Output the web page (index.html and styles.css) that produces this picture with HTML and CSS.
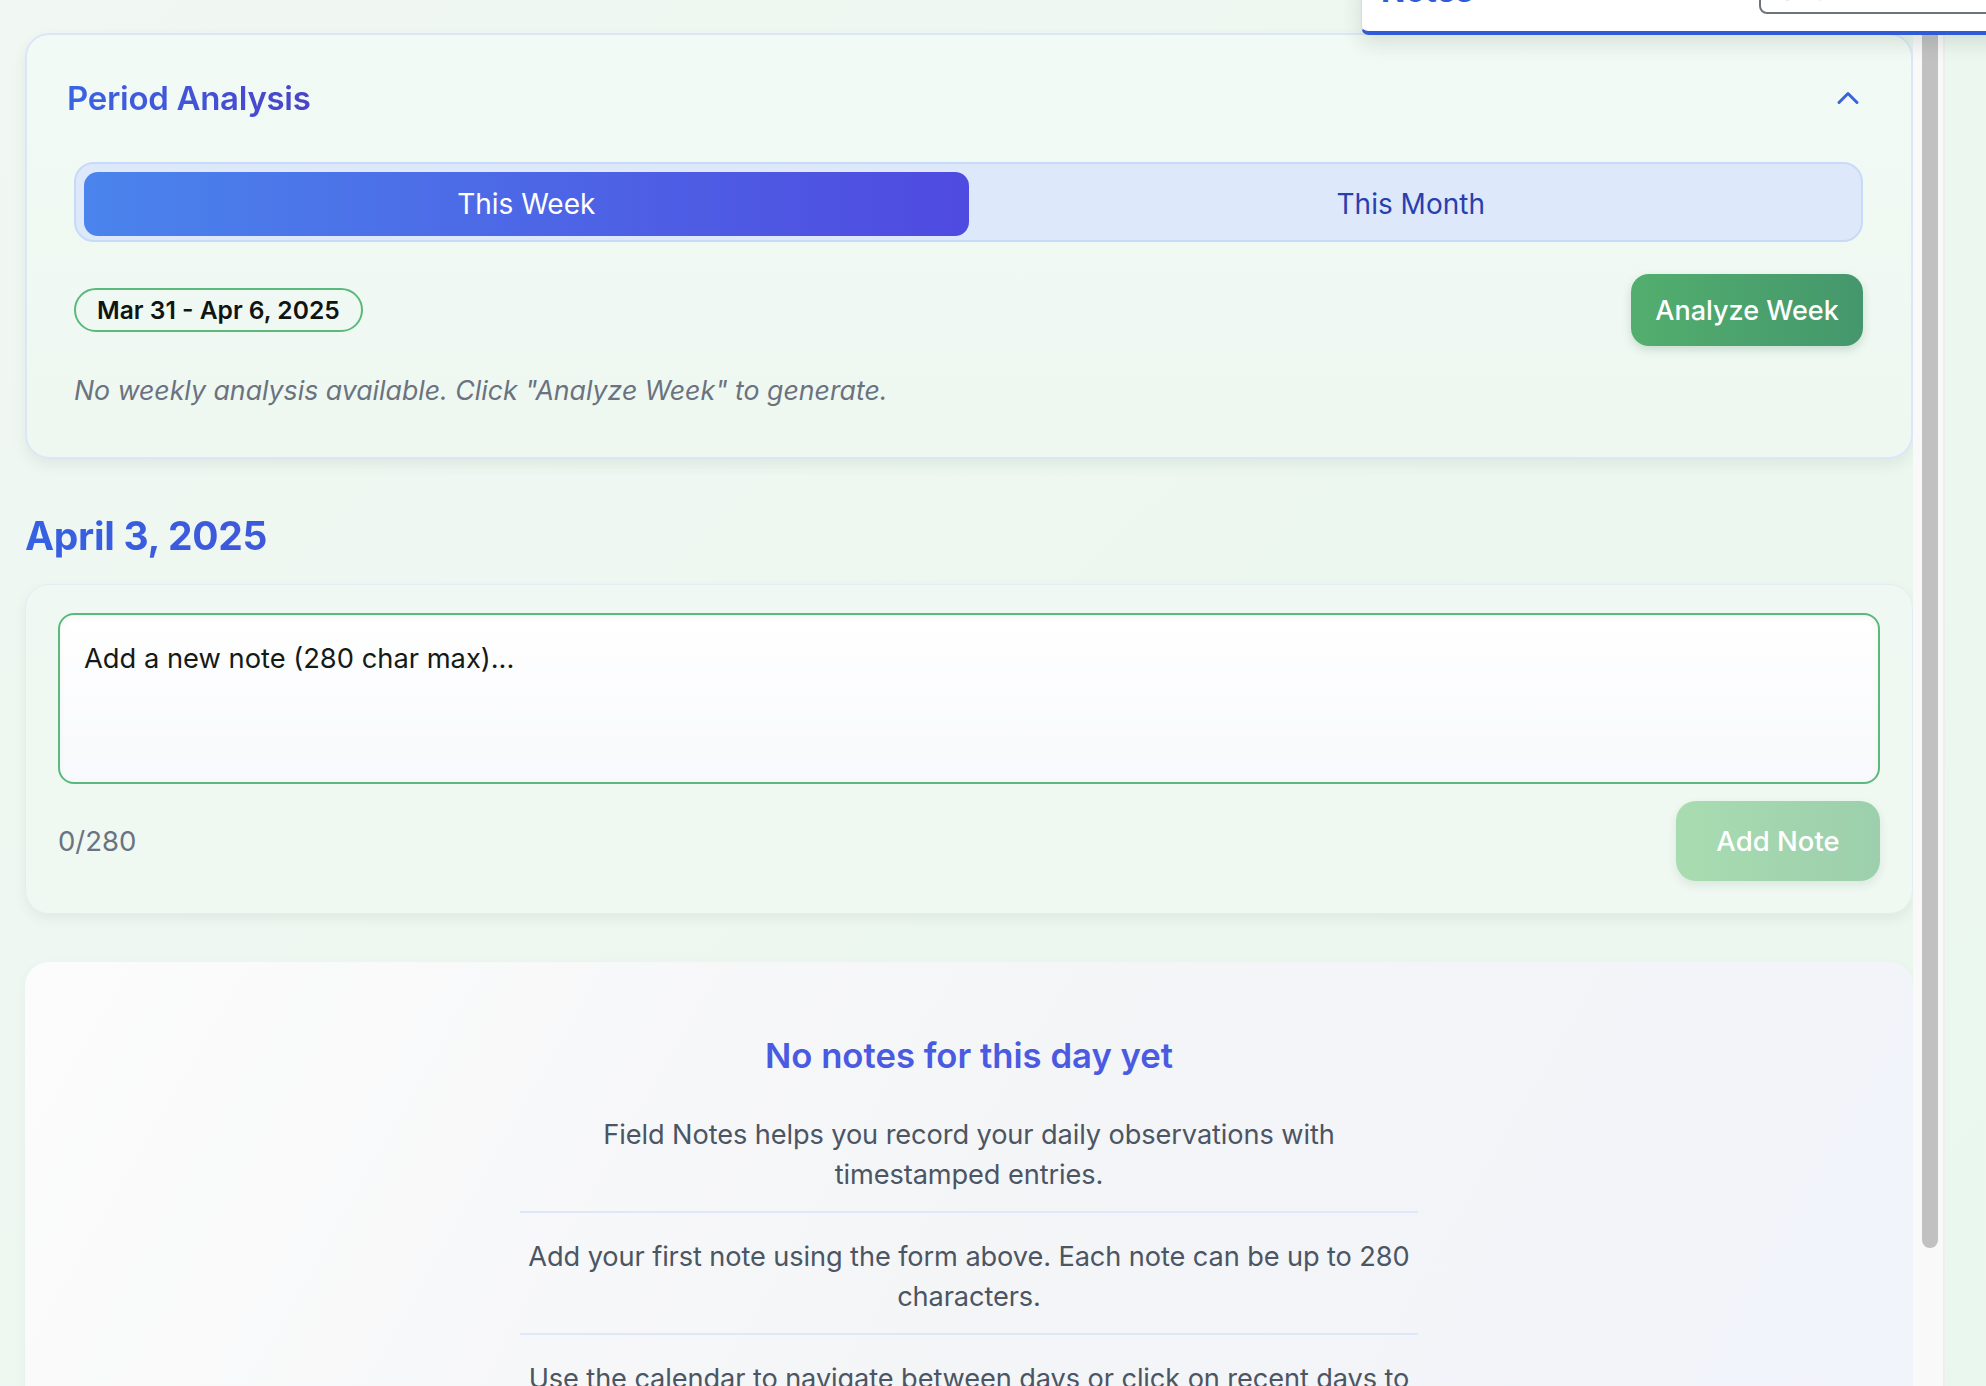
FILE: index.html
```html
<!DOCTYPE html>
<html lang="en">
<head>
<meta charset="utf-8">
<title>Field Notes</title>
<link rel="stylesheet" href="styles.css">
</head>
<body>
<div class="app">
  <main class="main">
    <section class="card period">
      <header class="period-head">
        <h2 class="period-title">Period Analysis</h2>
        <button class="collapse" aria-label="Collapse">
          <svg width="36" height="36" viewBox="0 0 24 24" fill="none" stroke="#3a62e0" stroke-width="2" stroke-linecap="round" stroke-linejoin="round"><polyline points="6 15 12 9 18 15"/></svg>
        </button>
      </header>
      <div class="period-body">
        <div class="toggle">
          <button class="tab active">This Week</button>
          <button class="tab">This Month</button>
        </div>
        <div class="range-row">
          <span class="range-pill">Mar 31 - Apr 6, 2025</span>
          <button class="btn-analyze">Analyze Week</button>
        </div>
        <p class="empty-analysis">No weekly analysis available. Click "Analyze Week" to generate.</p>
      </div>
    </section>

    <h1 class="day-title">April 3, 2025</h1>

    <section class="card composer">
      <div class="note-input">Add a new note (280 char max)...</div>
      <div class="composer-foot">
        <span class="counter">0/280</span>
        <button class="btn-add">Add Note</button>
      </div>
    </section>

    <section class="card empty">
      <h3 class="empty-title">No notes for this day yet</h3>
      <ul class="tips">
        <li>Field Notes helps you record your daily observations with timestamped entries.</li>
        <li>Add your first note using the form above. Each note can be up to 280 characters.</li>
        <li>Use the calendar to navigate between days or click on recent days to jump back.</li>
      </ul>
    </section>
  </main>
  <div class="scrollbar"><div class="thumb"></div></div>
  <div class="gutter"></div>

  <div class="notes-window">
    <div class="notes-title">Notes</div>
    <div class="notes-search"><span class="notes-search-text">Search notes...</span></div>
  </div>
</div>
</body>
</html>
```

FILE: styles.css
```css
* { box-sizing: border-box; }

html, body {
  margin: 0;
  padding: 0;
  height: 1386px;
  overflow: hidden;
}

body {
  font-family: "Inter", "Noto Sans", sans-serif;
  font-size: 28px;
  color: #1f2937;
  background: linear-gradient(135deg, #f1f7f3 0%, #edf7f0 50%, #eaf7ee 100%);
}

button {
  font-family: inherit;
  border: none;
  cursor: pointer;
}

.app {
  position: relative;
  display: flex;
  height: 1386px;
}

.main {
  width: 1913px;
  flex: 0 0 1913px;
  padding: 33px 0 0 25px;
  overflow: hidden;
}

.scrollbar {
  flex: 0 0 30px;
  background: #f9f9f9;
  border-right: 2px solid #eeeeee;
  padding: 0 5px 0 9px;
}

.thumb {
  width: 16px;
  height: 1248px;
  background: #c1c1c1;
  border-radius: 8px;
}

.gutter { flex: 1; }

/* cards */
.card {
  border-radius: 24px;
}

.period {
  border: 2px solid #dce6f8;
  background: linear-gradient(180deg, #f1faf4 0%, #eef8f1 100%);
  box-shadow: 0 6px 14px rgba(60, 90, 70, 0.09);
}

.period-head {
  display: flex;
  align-items: center;
  justify-content: space-between;
  padding: 36px 45px 0 40px;
  height: 90px;
}

.period-title {
  margin: 0;
  font-size: 33px;
  line-height: 54px;
  font-weight: 600;
  letter-spacing: -0.3px;
  background: linear-gradient(90deg, #3a64e4 0%, #4b43c8 100%);
  -webkit-background-clip: text;
  background-clip: text;
  color: transparent;
}

.collapse {
  background: none;
  padding: 0;
  width: 36px;
  height: 36px;
  display: flex;
}

.period-body {
  padding: 37px 48px 46px 47px;
}

.toggle {
  display: flex;
  height: 80px;
  padding: 8px;
  border: 2px solid #c7daf8;
  border-radius: 20px;
  background: #dde8fa;
}

.tab {
  flex: 1;
  height: 64px;
  border-radius: 14px;
  background: transparent;
  font-size: 28px;
  color: #2a3fae;
}

.tab.active {
  background: linear-gradient(90deg, #4a84ec 0%, #4f4ae0 100%);
  color: #ffffff;
}

.range-row {
  display: flex;
  align-items: center;
  justify-content: space-between;
  margin-top: 32px;
  height: 72px;
}

.range-pill {
  display: inline-flex;
  align-items: center;
  height: 44px;
  padding: 0 21px;
  border: 2px solid #5bb97b;
  border-radius: 22px;
  font-size: 24.6px;
  font-weight: 600;
  color: #111511;
}

.btn-analyze {
  width: 232px;
  height: 72px;
  border-radius: 18px;
  background: linear-gradient(90deg, #53ae6e 0%, #44976c 100%);
  color: #ffffff;
  font-size: 27px;
  font-weight: 500;
  box-shadow: 0 4px 10px rgba(40, 90, 60, 0.18);
}

.empty-analysis {
  margin: 23px 0 0;
  font-size: 26.7px;
  line-height: 42px;
  font-style: italic;
  color: #6b7280;
}

.day-title {
  margin: 53px 0 24px;
  font-size: 39px;
  line-height: 48px;
  font-weight: 700;
  letter-spacing: -0.3px;
  background: linear-gradient(90deg, #3561e2 0%, #3f58da 100%);
  -webkit-background-clip: text;
  background-clip: text;
  color: transparent;
  display: inline-block;
}

.composer {
  border: 1px solid #e4edf3;
  background: linear-gradient(180deg, #eff8f2 0%, #eff8f1 100%);
  box-shadow: 0 5px 12px rgba(60, 90, 70, 0.08);
  padding: 28px 32px 32px;
}

.note-input {
  height: 171px;
  border: 2px solid #5bb97b;
  border-radius: 16px;
  background: linear-gradient(180deg, #ffffff 0%, #f8f9fc 100%);
  box-shadow: inset 0 3px 6px rgba(0, 0, 0, 0.04);
  padding: 27px 24px;
  font-size: 27.3px;
  line-height: 34px;
  color: #141a16;
}

.composer-foot {
  display: flex;
  align-items: center;
  justify-content: space-between;
  margin-top: 17px;
}

.counter {
  font-size: 27.5px;
  color: #6b7280;
}

.btn-add {
  width: 204px;
  height: 80px;
  border-radius: 20px;
  background: linear-gradient(90deg, #a8dcb0 0%, #9ccfac 100%);
  color: #ffffff;
  font-size: 27.5px;
  font-weight: 500;
  box-shadow: 0 4px 10px rgba(40, 90, 60, 0.1);
}

.empty {
  margin-top: 48px;
  padding: 71px 40px 60px;
  background: linear-gradient(120deg, #fcfcfc 0%, #f4f5f7 50%, #f1f4fb 100%);
  box-shadow: 0 4px 12px rgba(60, 80, 90, 0.05);
  text-align: center;
}

.empty-title {
  margin: 0 0 14px;
  font-size: 34.7px;
  line-height: 44px;
  font-weight: 600;
  color: #4a5be2;
}

.tips {
  list-style: none;
  margin: 0 auto;
  padding: 0;
  max-width: 898px;
}

.tips li {
  padding: 24px 0 16px;
  border-bottom: 2px solid #dde8fb;
  font-size: 27.2px;
  line-height: 40px;
  letter-spacing: -0.1px;
  color: #4b5563;
}

/* overlapping notes window */
.notes-window {
  position: absolute;
  top: -60px;
  left: 1361px;
  width: 700px;
  height: 95px;
  display: flex;
  align-items: flex-start;
  padding: 14px 0 0 19px;
  background: #ffffff;
  border-left: 1px solid #d5dae2;
  border-bottom: 4px solid #2f5bd6;
  border-bottom-left-radius: 8px;
  box-shadow: 0 8px 20px rgba(40, 70, 50, 0.14);
}

.notes-title {
  flex: 0 0 378px;
  margin-top: 17px;
  font-size: 32px;
  line-height: 40px;
  font-weight: 700;
  color: #2f5bd6;
}

.notes-search {
  flex: 1;
  height: 60px;
  border: 2px solid #6f737a;
  border-radius: 8px;
  display: flex;
  align-items: flex-end;
  padding: 0 0 8px 18px;
}

.notes-search-text {
  font-size: 28px;
  line-height: 28px;
  color: #a9adb3;
}
```
